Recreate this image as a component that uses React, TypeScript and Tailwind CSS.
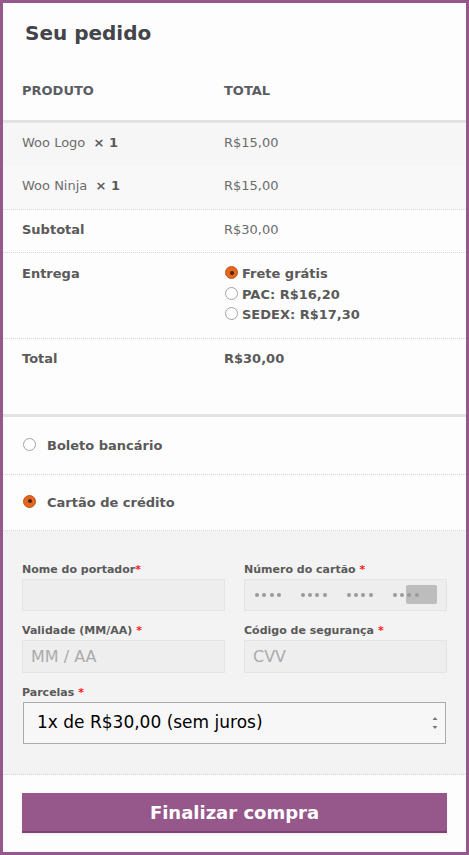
import React from "react";

const F = { fontFamily: '"DejaVu Sans", Verdana, sans-serif' };

function Radio({ checked }: { checked?: boolean }) {
  if (checked) {
    return (
      <span className="flex h-[13px] w-[13px] shrink-0 items-center justify-center rounded-full border border-[#c4561a] bg-[#e4661f]">
        <span className="h-[4px] w-[4px] rounded-full bg-[#4a2412]" />
      </span>
    );
  }
  return <span className="block h-[13px] w-[13px] shrink-0 rounded-full border border-[#a3a3a3] bg-white" />;
}

function Req() {
  return <span className="text-[#ff1a1a]">*</span>;
}

function Dots() {
  return (
    <div className="flex items-center gap-[20px]">
      {[0, 1, 2, 3].map((g) => (
        <div key={g} className="flex items-center gap-[3.3px]">
          {[0, 1, 2, 3].map((d) => (
            <span key={d} className="block h-[4px] w-[4px] rounded-full bg-[#9a9a9a]" />
          ))}
        </div>
      ))}
    </div>
  );
}

export default function App() {
  return (
    <div style={F} className="h-[855px] w-full border-[3px] border-[#96588a] bg-[#fdfdfd] text-[#6d6d6d]">
      <h3 className="px-[22px] pt-[19px] pb-[20px] text-[20px] font-bold leading-[22px] text-[#43454b]">Seu pedido</h3>

      {/* header */}
      <div className="grid h-[59px] grid-cols-[221px_1fr] border-b-[3px] border-[#e3e3e3] pt-[19px] text-[13px] font-bold leading-[16px] text-[#5a5d63]">
        <div className="pl-[19px]">PRODUTO</div>
        <div>TOTAL</div>
      </div>

      {/* items */}
      <div className="grid h-[43px] grid-cols-[221px_1fr] bg-[#f6f6f6] pt-[10px] text-[13px] leading-[20px]">
        <div className="pl-[19px]">
          Woo Logo&nbsp;&nbsp;<strong className="text-[#5a5a5a]">× 1</strong>
        </div>
        <div>R$15,00</div>
      </div>
      <div className="grid h-[44px] grid-cols-[221px_1fr] border-b border-dotted border-[#d6d6d6] bg-[#f8f8f8] pt-[10px] text-[13px] leading-[20px]">
        <div className="pl-[19px]">
          Woo Ninja&nbsp;&nbsp;<strong className="text-[#5a5a5a]">× 1</strong>
        </div>
        <div>R$15,00</div>
      </div>

      <div className="grid h-[43px] grid-cols-[221px_1fr] border-b border-dotted border-[#d6d6d6] pt-[10px] text-[13px] leading-[20px]">
        <div className="pl-[19px] font-bold text-[#5a5a5a]">Subtotal</div>
        <div>R$30,00</div>
      </div>

      <div className="grid h-[86px] grid-cols-[221px_1fr] border-b border-dotted border-[#d6d6d6] pt-[11px] text-[13px] leading-[20.5px]">
        <div className="pl-[19px] font-bold text-[#5a5a5a]">Entrega</div>
        <div className="flex flex-col font-bold text-[#5a5a5a]">
          <div className="flex items-center">
            <span className="ml-[1px] mr-[4px] -mt-[3px]"><Radio checked /></span>Frete grátis
          </div>
          <div className="flex items-center">
            <span className="ml-[1px] mr-[4px] -mt-[3px]"><Radio /></span>PAC: R$16,20
          </div>
          <div className="flex items-center">
            <span className="ml-[1px] mr-[4px] -mt-[3px]"><Radio /></span>SEDEX: R$17,30
          </div>
        </div>
      </div>

      <div className="grid h-[75px] grid-cols-[221px_1fr] pt-[10px] text-[13px] font-bold leading-[20px] text-[#5a5a5a]">
        <div className="pl-[19px]">Total</div>
        <div>R$30,00</div>
      </div>

      {/* payment methods */}
      <div className="border-t-[3px] border-[#e3e3e3]">
        <div className="flex h-[58px] items-center border-b border-dotted border-[#d6d6d6] pl-[20px] text-[13px] font-bold text-[#5a5a5a]">
          <span className="-mt-[2px]"><Radio /></span>
          <span className="ml-[11px]">Boleto bancário</span>
        </div>
        <div className="flex h-[56px] items-center border-b border-dotted border-[#d6d6d6] pl-[20px] text-[13px] font-bold text-[#5a5a5a]">
          <span className="-mt-[3px]"><Radio checked /></span>
          <span className="ml-[11px]">Cartão de crédito</span>
        </div>

        {/* card form */}
        <div className="border-b border-dotted border-[#d6d6d6] bg-[#f3f3f3] px-[19px] pt-[32px] pb-[30px]">
          <div className="grid grid-cols-2 gap-x-[19px]">
            <div>
              <div className="text-[11px] font-bold leading-[14px] text-[#5a5a5a]">
                Nome do portador<Req />
              </div>
              <div className="mt-[2px] h-[32px] border border-[#e4e4e4] bg-[#eeeeee]" />
            </div>
            <div>
              <div className="text-[11px] font-bold leading-[14px] text-[#5a5a5a]">
                Número do cartão <Req />
              </div>
              <div className="relative mt-[2px] flex h-[32px] items-center border border-[#e4e4e4] bg-[#eeeeee] pl-[10px]">
                <span className="absolute left-[161px] top-[5px] h-[19px] w-[31px] rounded-[2px] bg-[#bdbdbd]" />
                <div className="relative">
                  <Dots />
                </div>
              </div>
            </div>
            <div className="mt-[13px]">
              <div className="text-[11px] font-bold leading-[14px] text-[#5a5a5a]">
                Validade (MM/AA) <Req />
              </div>
              <div className="mt-[2px] flex h-[33px] items-center border border-[#e4e4e4] bg-[#eeeeee] pl-[8px] text-[16px] text-[#ababab]">
                MM / AA
              </div>
            </div>
            <div className="mt-[13px]">
              <div className="text-[11px] font-bold leading-[14px] text-[#5a5a5a]">
                Código de segurança <Req />
              </div>
              <div className="mt-[2px] flex h-[33px] items-center border border-[#e4e4e4] bg-[#eeeeee] pl-[8px] text-[16px] text-[#ababab]">
                CVV
              </div>
            </div>
          </div>
          <div className="mt-[13px] text-[11px] font-bold leading-[14px] text-[#5a5a5a]">
            Parcelas <Req />
          </div>
          <div className="mx-px mt-[2px] flex h-[42px] items-center justify-between border border-[#ababab] bg-[#f7f7f7] pl-[13px] pr-[7px]">
            <span className="text-[17px] text-black">1x de R$30,00 (sem juros)</span>
            <svg width="6" height="14" viewBox="0 0 6 14">
              <path d="M0.5 4 L3 1 L5.5 4 Z" fill="#777" />
              <path d="M0.5 10 L3 13 L5.5 10 Z" fill="#777" />
            </svg>
          </div>
        </div>

        <div className="px-[19px] pt-[18px]">
          <button className="flex h-[40px] w-full items-center justify-center border-b-2 border-[#7b4470] bg-[#96588a] text-[18px] font-bold text-white shadow-[0_2px_2px_rgba(0,0,0,0.05)]">
            Finalizar compra
          </button>
        </div>
      </div>
    </div>
  );
}
